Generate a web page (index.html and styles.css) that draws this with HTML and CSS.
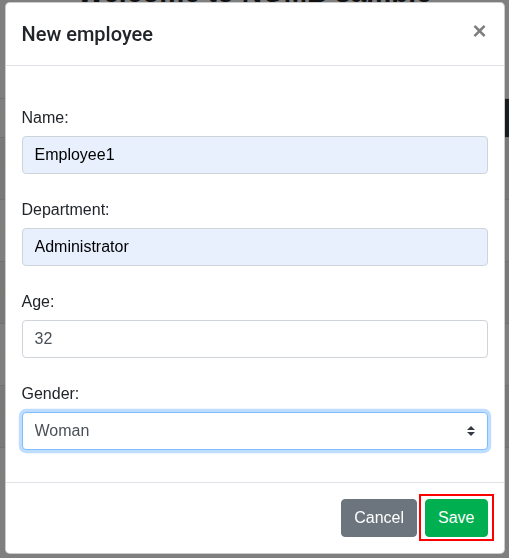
FILE: index.html
```html
<!DOCTYPE html>
<html lang="en">
<head>
<meta charset="utf-8">
<title>New employee</title>
<link rel="stylesheet" href="styles.css">
</head>
<body>
<div class="page">
  <h1 class="page-title">Welcome to NOMB sample</h1>
  <table class="emp-table">
    <thead>
      <tr><th>Names</th><th>Department</th><th>Age</th><th class="cell-dark">Actions</th></tr>
    </thead>
    <tbody>
      <tr><td>Employee2</td><td>Sales</td><td>28</td><td>Edit</td></tr>
      <tr><td>Employee3</td><td>Support</td><td>41</td><td>Edit</td></tr>
      <tr><td>Employee4</td><td>Finance</td><td>35</td><td>Edit</td></tr>
      <tr><td>Employee5</td><td>Marketing</td><td>30</td><td>Edit</td></tr>
      <tr><td>Employees</td><td>Sales</td><td>26</td><td>Edit</td></tr>
      <tr><td>Employee7</td><td>Support</td><td>44</td><td>Edit</td></tr>
    </tbody>
  </table>
</div>

<div class="backdrop"></div>

<div class="modal">
  <div class="modal-dialog">
    <div class="modal-content">
      <div class="modal-header">
        <h5 class="modal-title">New employee</h5>
        <button type="button" class="close" aria-label="Close">&times;</button>
      </div>
      <div class="modal-body">
        <form class="emp-form">
          <div class="form-group">
            <label for="name">Name:</label>
            <input id="name" class="form-control autofilled" type="text" value="Employee1">
          </div>
          <div class="form-group">
            <label for="dept">Department:</label>
            <input id="dept" class="form-control autofilled" type="text" value="Administrator">
          </div>
          <div class="form-group">
            <label for="age">Age:</label>
            <input id="age" class="form-control" type="text" value="32">
          </div>
          <div class="form-group">
            <label for="gender">Gender:</label>
            <div class="select-wrap">
              <select id="gender" class="form-control custom-select">
                <option>Man</option>
                <option selected>Woman</option>
              </select>
              <svg class="select-arrows" width="8" height="10" viewBox="0 0 4 5" aria-hidden="true"><path fill="#343a40" d="M2 0L0 2h4zm0 5L0 3h4z"/></svg>
            </div>
          </div>
        </form>
      </div>
      <div class="modal-footer">
        <button type="button" class="btn btn-secondary">Cancel</button>
        <button type="button" class="btn btn-success btn-highlight">Save</button>
      </div>
    </div>
  </div>
</div>
</body>
</html>
```

FILE: styles.css
```css
* { box-sizing: border-box; }

html, body {
  margin: 0;
  padding: 0;
}

body {
  font-family: "Liberation Sans", Arial, sans-serif;
  font-size: 16px;
  line-height: 1.5;
  color: #212529;
  background: #fff;
}

/* background page */
.page-title {
  margin: -24px 0 0;
  font-size: 28px;
  line-height: 1.2;
  font-weight: 700;
  text-align: center;
}

.emp-table {
  margin-top: 88px;
  width: 100%;
  border-collapse: collapse;
}

.emp-table th,
.emp-table td {
  border-top: 1px solid #dee2e6;
  padding: 7px 4px;
  text-align: left;
  vertical-align: middle;
}

.emp-table td {
  height: 62px;
}

.emp-table th {
  height: 38px;
  font-weight: 400;
}

.emp-table .cell-dark {
  background: #343a40;
  color: #fff;
  text-align: right;
}

.emp-table tbody tr:nth-child(odd) td {
  background: rgba(0, 0, 0, 0.05);
}

.backdrop {
  position: fixed;
  inset: 0;
  background: rgba(0, 0, 0, 0.5);
}

/* modal */
.modal {
  position: fixed;
  inset: 0;
  overflow: hidden;
}

.modal-dialog {
  max-width: 500px;
  margin: 2px auto 0;
}

.modal-content {
  display: flex;
  flex-direction: column;
  background: #fff;
  border: 1px solid rgba(0, 0, 0, 0.2);
  border-radius: 4.8px;
}

.modal-header {
  display: flex;
  align-items: flex-start;
  justify-content: space-between;
  padding: 16px;
  border-bottom: 1px solid #dee2e6;
}

.modal-title {
  margin: 0;
  font-family: Roboto, "Liberation Sans", Arial, sans-serif;
  font-size: 20px;
  line-height: 30px;
  font-weight: 500;
  color: #212529;
}

.close {
  padding: 16px;
  margin: -16px -15px -16px auto;
  background: transparent;
  border: 0;
  font-family: "Liberation Sans", Arial, sans-serif;
  font-size: 24px;
  font-weight: 700;
  line-height: 1;
  color: #000;
  opacity: 0.5;
  text-shadow: 0 1px 0 #fff;
  cursor: pointer;
}

.modal-body {
  padding: 16px;
}

.emp-form {
  display: flex;
  flex-direction: column;
  margin: 0;
}

.form-group {
  margin-top: 22px;
}

.form-group:last-child {
  margin-bottom: 16px;
}

.form-group label {
  display: block;
  padding-top: 2px;
  margin-bottom: 6px;
  line-height: 24px;
}

.form-control {
  display: block;
  width: 100%;
  height: 38px;
  padding: 6px 12px;
  font-family: "Liberation Sans", Arial, sans-serif;
  font-size: 16px;
  line-height: 24px;
  color: #495057;
  background: #fff;
  border: 1px solid #ced4da;
  border-radius: 4px;
  outline: none;
}

.form-control.autofilled {
  background: #e8f0fe;
  color: #000;
}

.select-wrap {
  position: relative;
}

.custom-select {
  appearance: none;
  -webkit-appearance: none;
  padding-right: 28px;
  border-color: #80bdff;
  box-shadow: 0 0 0 3.2px rgba(0, 123, 255, 0.25);
}

.select-arrows {
  position: absolute;
  right: 13px;
  top: 14px;
  pointer-events: none;
}

.modal-footer {
  display: flex;
  align-items: center;
  justify-content: flex-end;
  padding: 12px;
  border-top: 1px solid #dee2e6;
}

.btn {
  margin: 4px;
  padding: 6px 12px;
  font-family: "Liberation Sans", Arial, sans-serif;
  font-size: 16px;
  line-height: 24px;
  border: 1px solid transparent;
  border-radius: 4px;
  color: #fff;
  cursor: pointer;
}

.btn-secondary {
  background: #6c757d;
  border-color: #6c757d;
}

.btn-success {
  background: #00b050;
  border-color: #00b050;
}

.btn-highlight {
  position: relative;
}

/* red annotation frame drawn over the Save button */
.btn-highlight::after {
  content: "";
  position: absolute;
  top: -6px;
  bottom: -5px;
  left: -7px;
  right: -7px;
  border: 2.5px solid #ff0000;
  pointer-events: none;
}
```
